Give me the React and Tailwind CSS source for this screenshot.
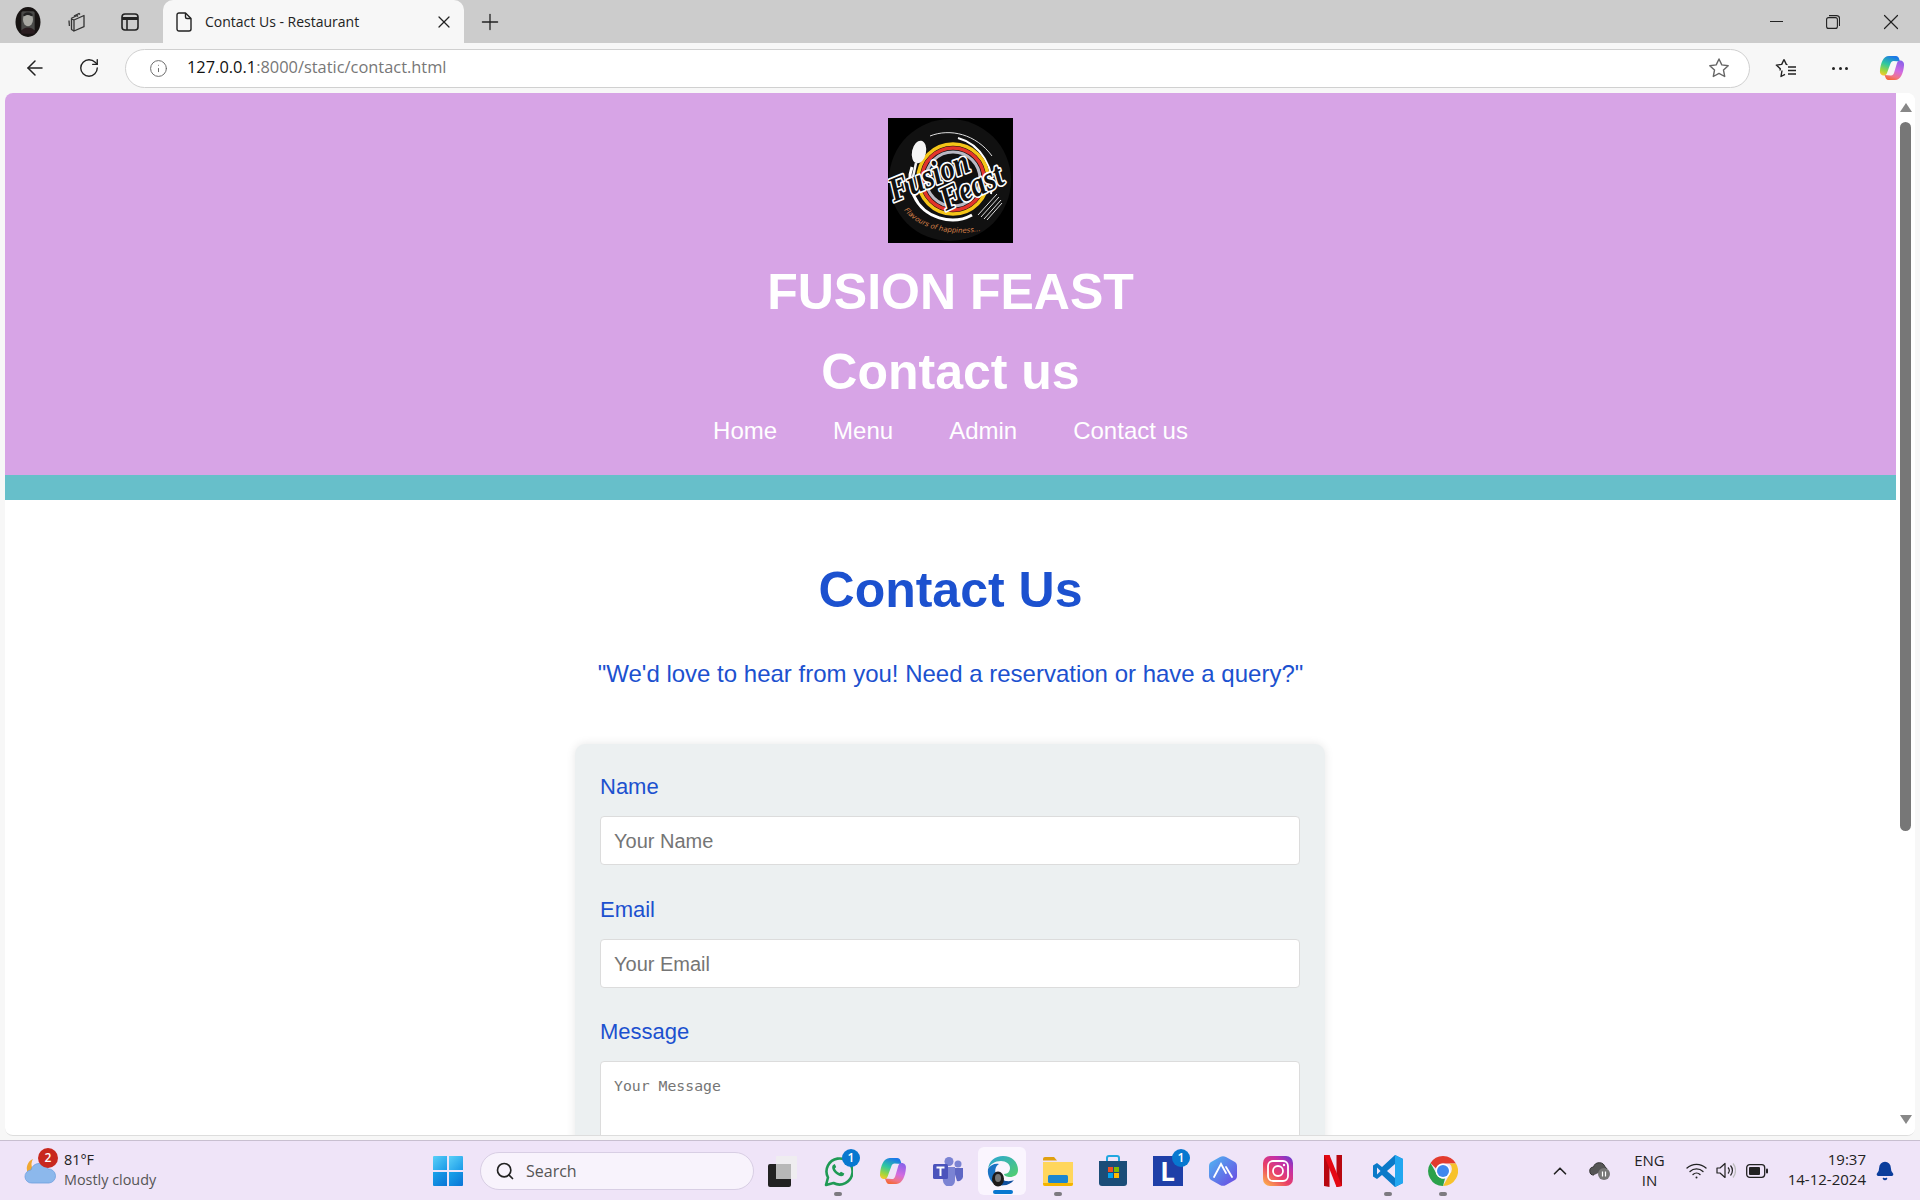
import React from 'react';
import { ArrowLeft, RotateCw, Info, X, Plus, ChevronUp, Search, Bell } from 'lucide-react';

const Avatar = ({ size = 30 }) => (
  <svg width={size} height={size} viewBox="0 0 30 36">
    <ellipse cx="15" cy="18" rx="15" ry="18" fill="#171312" />
    <rect x="7" y="5" width="16" height="24" rx="2" fill="#4a4a48" />
    <ellipse cx="15" cy="15" rx="6" ry="8" fill="#a8a8a2" />
    <path d="M7 29c2-6 14-6 16 0v3H7z" fill="#2a1d20" />
    <path d="M9 10c2-5 10-5 12 0l-2 1c-3-2-6-2-8 0z" fill="#222" />
  </svg>
);

const CollectionsIcon = () => (
  <svg width="22" height="22" viewBox="0 0 22 22" fill="none" stroke="#333" strokeWidth="1.3" strokeLinejoin="round">
    <path d="M8 5 13 2.500l1 1" />
    <path d="M5 7.500 11 4.500l1 1" />
    <path d="M3 9.500 3.400 15" />
    <path d="M8 9l10-4.500v11.200L8 20z" />
    <path d="M8 9 5.500 8v10.500L8 20" />
  </svg>
);

const TabActionsIcon = () => (
  <svg width="18" height="18" viewBox="0 0 18 18" fill="none" stroke="#222" strokeWidth="1.6">
    <rect x="1" y="1" width="16" height="16" rx="3" />
    <path d="M1 5.500h16" strokeWidth="3" />
    <path d="M6 5.500V17" />
  </svg>
);

const DocIcon = () => (
  <svg width="16" height="20" viewBox="0 0 16 20" fill="none" stroke="#222" strokeWidth="1.4" strokeLinejoin="round">
    <path d="M3 1h6.500L15 6.500V17a2 2 0 0 1-2 2H3a2 2 0 0 1-2-2V3a2 2 0 0 1 2-2z" />
    <path d="M9.500 1v4a1.500 1.500 0 0 0 1.500 1.500h4" />
  </svg>
);

const StarOutline = ({ color = '#666' }) => (
  <svg width="22" height="22" viewBox="0 0 22 22" fill="none" stroke={color} strokeWidth="1.4" strokeLinejoin="round">
    <path d="M11 2l2.800 5.900 6.400.8-4.700 4.400 1.200 6.400L11 16.400l-5.700 3.100 1.200-6.400L1.800 8.700l6.400-.8z" />
  </svg>
);

const FavoritesIcon = () => (
  <svg width="22" height="20" viewBox="0 0 22 20" fill="none" stroke="#222" strokeWidth="1.4" strokeLinejoin="round">
    <path d="M9 1.500l2.300 4.900 1.200.2M7 12.500l-1 6 4-2.200" />
    <path d="M9 1.500 6.700 6.400l-5.400.7 4 3.700-.3 1.700" />
    <path d="M13 9h8M13 12.500h8M13 16h8" strokeWidth="1.5" />
  </svg>
);

const CopilotIcon = ({ size = 26, id = 'a' }) => (
  <svg width={size} height={size} viewBox="0 0 26 26">
    <defs>
      <linearGradient id={`cpl${id}`} x1="0.6" y1="0" x2="0.2" y2="1">
        <stop offset="0" stopColor="#1b78e8" />
        <stop offset="0.45" stopColor="#2fc8a0" />
        <stop offset="0.8" stopColor="#a5d63a" />
        <stop offset="1" stopColor="#f6c92e" />
      </linearGradient>
      <linearGradient id={`cpr${id}`} x1="0.7" y1="0" x2="0.35" y2="1">
        <stop offset="0" stopColor="#8a62ea" />
        <stop offset="0.5" stopColor="#d26be0" />
        <stop offset="0.8" stopColor="#f0758a" />
        <stop offset="1" stopColor="#f4683a" />
      </linearGradient>
    </defs>
    <path d="M10 1h7c1.500 0 2.500 1 3 2.500l1 3-6.500-.5c-1.500 0-2.500 1-3 2.500L8 18c-.5 1.500-1.500 2.500-3 2.500-2.500 0-4.500-2-4-5C1.500 9 4 1 10 1z" fill={`url(#cpl${id})`} />
    <path d="M16 25H9c-1 0-2-1-2.500-2.500L5.500 20l6.500.5c1.500 0 2.500-1 3-2.500l3-10c.5-1.500 1.500-2.500 3-2.500 2.500 0 4.500 2 4 5C24.500 17 22 25 16 25z" fill={`url(#cpr${id})`} />
  </svg>
);

const FusionLogo = () => (
  <svg width="125" height="125" viewBox="0 0 125 125">
    <rect width="125" height="125" fill="#000" />
    <circle cx="62" cy="62" r="61" fill="#111" />
    <path d="M42 18C62 10 88 16 104 38" fill="none" stroke="#ddd" strokeWidth="1" />
    <path d="M84 97C64 108 36 100 26 78C21 68 21 57 24 49" fill="none" stroke="#fff" strokeWidth="3" />
    <path d="M70 20C92 26 108 50 103 76" fill="none" stroke="#fff" strokeWidth="2" />
    <circle cx="65" cy="61" r="35" fill="none" stroke="#f5c518" strokeWidth="3.500" />
    <circle cx="65" cy="61" r="31" fill="none" stroke="#e3342b" strokeWidth="3.500" />
    <circle cx="65" cy="61" r="27" fill="none" stroke="#b9b9c4" strokeWidth="3" />
    <ellipse cx="31" cy="34" rx="7" ry="11.500" transform="rotate(12 31 34)" fill="#f4f4f4" />
    <path d="M28 45l-3 14" stroke="#f4f4f4" strokeWidth="2.500" />
    <g stroke="#ddd" strokeWidth="1">
      <path d="M109 76 90 97M111 79 93 99M113 82 96 101M114 85 99 102" />
    </g>
    <text x="6" y="84" transform="rotate(-22 6 84)" fontFamily="'Liberation Serif', serif" fontStyle="italic" fontWeight="700" fontSize="34" fill="#111" stroke="#fff" strokeWidth="3.400" strokeLinejoin="round" paintOrder="stroke" textLength="84" lengthAdjust="spacingAndGlyphs">Fusion</text>
    <text x="58" y="93" transform="rotate(-25 58 93)" fontFamily="'Liberation Serif', serif" fontStyle="italic" fontWeight="700" fontSize="34" fill="#111" stroke="#fff" strokeWidth="3.400" strokeLinejoin="round" paintOrder="stroke" textLength="66" lengthAdjust="spacingAndGlyphs">Feast</text>
    <path id="logo-tag" d="M16 92C28 108 56 119 92 113" fill="none" />
    <text fontFamily="'DejaVu Sans', sans-serif" fontStyle="italic" fontSize="7" fill="#d9824a">
      <textPath href="#logo-tag">Flavours of happiness...</textPath>
    </text>
  </svg>
);

const WeatherIcon = () => (
  <svg width="32" height="34" viewBox="0 0 32 34">
    <path d="M9 5a10 10 0 0 0 6 15L4 19A10 10 0 0 1 9 5z" fill="#f0a832" />
    <path d="M8 29a6.500 6.500 0 0 1-1-13 9 9 0 0 1 17-1 7 7 0 0 1 1 14z" fill="#8cb8ec" stroke="#6d9ede" strokeWidth="0.800" />
  </svg>
);

const StartIcon = () => (
  <svg width="30" height="30" viewBox="0 0 30 30">
    <defs>
      <linearGradient id="stA" x1="0" y1="0" x2="1" y2="1">
        <stop offset="0" stopColor="#5ad0f8" />
        <stop offset="1" stopColor="#1a9ae8" />
      </linearGradient>
      <linearGradient id="stB" x1="0" y1="0" x2="1" y2="1">
        <stop offset="0" stopColor="#1aa4ea" />
        <stop offset="1" stopColor="#0a74d6" />
      </linearGradient>
    </defs>
    <path d="M1 0h13v14H0V1a1 1 0 0 1 1-1z" fill="url(#stA)" />
    <path d="M16 0h13a1 1 0 0 1 1 1v13H16z" fill="url(#stA)" />
    <path d="M0 16h14v14H1a1 1 0 0 1-1-1z" fill="url(#stB)" />
    <path d="M16 16h14v13a1 1 0 0 1-1 1H16z" fill="url(#stB)" />
  </svg>
);

const TaskViewIcon = () => (
  <svg width="30" height="32" viewBox="0 0 30 32">
    <rect x="0" y="9" width="23" height="23" rx="2" fill="#222" />
    <rect x="8" y="1" width="21" height="23" rx="1" fill="#eeeeee" fillOpacity="0.85" />
    <rect x="8" y="9" width="15" height="15" fill="#b8b8b8" />
  </svg>
);

const WhatsappIcon = () => (
  <svg width="30" height="32" viewBox="0 0 30 32" fill="none">
    <path d="M3 30l2-7.500A13 13 0 1 1 10.500 28z" stroke="#1f9a55" strokeWidth="2.600" strokeLinejoin="round" />
    <path d="M10 10c-1.500 1.500-1 5 2 8s6.500 4 8.500 2.500l.8-2-3.300-1.800-1.500 1.400c-2-.8-3.700-2.500-4.600-4.500l1.300-1.500L11.800 9z" fill="#1f9a55" />
  </svg>
);

const TeamsIcon = () => (
  <svg width="32" height="30" viewBox="0 0 32 30">
    <circle cx="26" cy="8" r="3.500" fill="#7b83d3" />
    <circle cx="17" cy="5.500" r="4.500" fill="#7b83d3" />
    <path d="M21 12h10v9a5 5 0 0 1-6 4z" fill="#5f67c4" />
    <path d="M9 11h14v13a6 6 0 0 1-12 1z" fill="#7b83d3" />
    <rect x="1" y="8" width="15" height="15" rx="1.500" fill="#4b53bc" />
    <path d="M4.500 11.500h8M8.500 11.500V20" stroke="#fff" strokeWidth="2" />
  </svg>
);

const EdgeIcon = () => (
  <svg width="32" height="32" viewBox="0 0 32 32">
    <defs>
      <linearGradient id="edA" x1="0" y1="0" x2="1" y2="1">
        <stop offset="0" stopColor="#2aa5d8" />
        <stop offset="1" stopColor="#54d06a" />
      </linearGradient>
    </defs>
    <path d="M16 1c9 0 15 6 15 14 0 5-4 7-8 7-3 0-6-1-6-3 4 0 6-3 6-6 0-4-4-7-9-7C8 6 3 9 1 14 2 6 8 1 16 1z" fill="url(#edA)" />
    <path d="M1 14c2-4 7-6 11-5-4 2-5 8-2 13 2 4 7 6 12 5-3 3-8 4-12 3C4 28 0 21 1 14z" fill="#1b74c4" />
    <path d="M14 30c5 1 10-1 13-5-2 1-7 2-11 0z" fill="#0f4f9e" />
    <ellipse cx="11" cy="24" rx="6" ry="7.500" fill="#1d1a1a" />
    <ellipse cx="11" cy="23" rx="3" ry="4" fill="#777" />
  </svg>
);

const FolderIcon = () => (
  <svg width="30" height="30" viewBox="0 0 30 30">
    <path d="M0 3a2 2 0 0 1 2-2h9l3 3.500H0z" fill="#e0a010" />
    <path d="M0 6h30v22a2 2 0 0 1-2 2H2a2 2 0 0 1-2-2z" fill="#ffd65c" />
    <rect x="5" y="19" width="20" height="8" rx="1.500" fill="#1b86d0" />
    <path d="M0 27h30v1a2 2 0 0 1-2 2H2a2 2 0 0 1-2-2z" fill="#f4b400" />
  </svg>
);

const StoreIcon = () => (
  <svg width="30" height="32" viewBox="0 0 30 32">
    <path d="M9 7V3a2 2 0 0 1 2-2h8a2 2 0 0 1 2 2v4" fill="none" stroke="#22a7e0" strokeWidth="2" />
    <path d="M1 6h28v22a3 3 0 0 1-3 3H4a3 3 0 0 1-3-3z" fill="#1b4d78" />
    <rect x="10" y="12" width="5" height="5" fill="#f25022" />
    <rect x="16" y="12" width="5" height="5" fill="#7fba00" />
    <rect x="10" y="18" width="5" height="5" fill="#00a4ef" />
    <rect x="16" y="18" width="5" height="5" fill="#ffb900" />
  </svg>
);

const LIcon = () => (
  <div className="flex h-[30px] w-[30px] items-center justify-center bg-[#1f3fa8] text-[26px] leading-none font-bold text-white">L</div>
);

const ArcIcon = () => (
  <svg width="28" height="30" viewBox="0 0 28 30">
    <defs>
      <linearGradient id="acA" x1="0" y1="0" x2="1" y2="1">
        <stop offset="0" stopColor="#4fb8f2" />
        <stop offset="1" stopColor="#6d45e2" />
      </linearGradient>
    </defs>
    <path d="M11 1a6 6 0 0 1 6 0l8 4.500a5 5 0 0 1 3 4.500v10a5 5 0 0 1-3 4.500L17 29a6 6 0 0 1-6 0l-8-4.500A5 5 0 0 1 0 20V10a5 5 0 0 1 3-4.500z" fill="url(#acA)" />
    <path d="M5 21 12 8l5 9M17 11l6 10" stroke="#fff" strokeWidth="1.800" strokeLinecap="round" fill="none" />
  </svg>
);

const InstagramIcon = () => (
  <svg width="30" height="30" viewBox="0 0 30 30">
    <defs>
      <linearGradient id="igA" x1="0.1" y1="1" x2="0.9" y2="0">
        <stop offset="0" stopColor="#fdb04a" />
        <stop offset="0.4" stopColor="#ea3f66" />
        <stop offset="0.75" stopColor="#c22fa8" />
        <stop offset="1" stopColor="#6a3cd0" />
      </linearGradient>
    </defs>
    <rect width="30" height="30" rx="7" fill="url(#igA)" />
    <rect x="5" y="5" width="20" height="20" rx="5" fill="none" stroke="#fff" strokeWidth="1.800" />
    <circle cx="15" cy="15" r="5" fill="none" stroke="#fff" strokeWidth="1.800" />
    <circle cx="21" cy="9" r="1.200" fill="#fff" />
  </svg>
);

const NetflixIcon = () => (
  <svg width="18" height="32" viewBox="0 0 18 32">
    <path d="M0 0h5.500v32L0 31z" fill="#b80710" />
    <path d="M12.500 0H18v31l-5.500 1z" fill="#b80710" />
    <path d="M0 0h5.500L18 31l-5.500 1z" fill="#e50914" />
  </svg>
);

const VscodeIcon = () => (
  <svg width="30" height="32" viewBox="0 0 30 32">
    <path d="M22 0l8 4v24l-8 4L9 20l-5 4-4-2.500V10.500L4 8l5 4z" fill="#0b7ac8" />
    <path d="M22 0l8 4v24l-8 4z" fill="#22a7f0" />
    <path d="M22 9v14l-8-7z" fill="#f0e7fa" />
    <path d="M4 12.500v7L7.500 16z" fill="#f0e7fa" />
  </svg>
);

const ChromeIcon = () => (
  <svg width="30" height="30" viewBox="0 0 30 30">
    <path d="M15 0a15 15 0 0 1 13 7.500H15a7.500 7.500 0 0 0-7 5L2.500 7A15 15 0 0 1 15 0z" fill="#e33b2e" />
    <path d="M28 7.500A15 15 0 0 1 15 30l6.500-11.500a7.500 7.500 0 0 0 0-11z" fill="#f7c22c" />
    <path d="M15 30A15 15 0 0 1 2.500 7L9 18.500a7.500 7.500 0 0 0 8 4z" fill="#2ba14b" />
    <circle cx="15" cy="15" r="7.500" fill="#fff" />
    <circle cx="15" cy="15" r="6" fill="#3f87ee" />
  </svg>
);

const CloudPausedIcon = () => (
  <svg width="22" height="20" viewBox="0 0 22 20">
    <path d="M5 14a4 4 0 0 1-.5-8A6 6 0 0 1 16 6a4 4 0 0 1 2 2" fill="#555" stroke="#333" strokeWidth="1" />
    <circle cx="15" cy="13" r="6" fill="#777" />
    <path d="M13.500 10.500v5M16.500 10.500v5" stroke="#fff" strokeWidth="1.200" />
  </svg>
);

const WifiIcon = () => (
  <svg width="21" height="17" viewBox="0 0 21 17" fill="none" stroke="#222" strokeWidth="1.300" strokeLinecap="round">
    <path d="M1 6a14 14 0 0 1 19 0" />
    <path d="M4 9.500a9.500 9.500 0 0 1 13 0" />
    <path d="M7 12.500a5 5 0 0 1 7 0" />
    <circle cx="10.500" cy="15.500" r="1" fill="#222" stroke="none" />
  </svg>
);

const VolumeIcon = () => (
  <svg width="20" height="17" viewBox="0 0 20 17" fill="none" stroke="#222" strokeWidth="1.200" strokeLinejoin="round">
    <path d="M1 6h3l5-4.500v14L4 11H1z" />
    <path d="M12 5.500a4.500 4.500 0 0 1 0 6M14.500 3.500a7.500 7.500 0 0 1 0 10" />
    <path d="M17 1.500a11 11 0 0 1 0 14" stroke="#bbb" />
  </svg>
);

const BatteryIcon = () => (
  <svg width="22" height="14" viewBox="0 0 22 14">
    <rect x="0.700" y="0.700" width="18" height="12.600" rx="3" fill="none" stroke="#222" strokeWidth="1.300" />
    <rect x="3" y="3" width="11" height="8" rx="1" fill="#222" />
    <rect x="20" y="4.500" width="2" height="5" rx="1" fill="#222" />
  </svg>
);

const taskbarApps = [
  { key: 'taskview', icon: <TaskViewIcon /> },
  { key: 'whatsapp', icon: <WhatsappIcon />, badge: '1', running: true },
  { key: 'copilot', icon: <CopilotIcon size={28} id="b" /> },
  { key: 'teams', icon: <TeamsIcon /> },
  { key: 'edge', icon: <EdgeIcon />, active: true },
  { key: 'folder', icon: <FolderIcon />, running: true },
  { key: 'store', icon: <StoreIcon /> },
  { key: 'l', icon: <LIcon />, badge: '1' },
  { key: 'arc', icon: <ArcIcon /> },
  { key: 'instagram', icon: <InstagramIcon /> },
  { key: 'netflix', icon: <NetflixIcon /> },
  { key: 'vscode', icon: <VscodeIcon />, running: true },
  { key: 'chrome', icon: <ChromeIcon />, running: true },
];

const TaskbarApp = ({ app }) => (
  <div className="relative flex h-12 w-[55px] items-center justify-center">
    {app.active && <div className="absolute inset-y-0 left-[3px] right-1 rounded-md bg-[#faf5fe]" />}
    <div className="relative">{app.icon}</div>
    {app.badge && (
      <span className="absolute right-[5px] top-[2px] flex h-[18px] w-[18px] items-center justify-center rounded-full bg-[#0878d0] text-[12px] font-semibold text-white">
        {app.badge}
      </span>
    )}
    {app.running && <span className="absolute bottom-[-1px] h-[4px] w-2 rounded-full bg-[#7d7a80]" />}
    {app.active && <span className="absolute bottom-[1px] h-[4px] w-5 rounded-full bg-[#0878d0]" />}
  </div>
);

const navLinks = ['Home', 'Menu', 'Admin', 'Contact us'];

const Field = ({ label, placeholder }) => (
  <div className="mb-[31.500px]">
    <label className="mb-[17px] block text-[22px] leading-[25px] text-[#1c51cf]">{label}</label>
    <input
      placeholder={placeholder}
      className="block h-[49px] w-full rounded-[4px] border border-[#dcdcdc] bg-white px-[13px] pt-[2px] text-[20px] placeholder:text-[#757575] outline-none"
    />
  </div>
);

const App = () => {
  return (
    <div className="flex h-screen flex-col overflow-hidden bg-[#f7f7f7] font-['Liberation_Sans',sans-serif]">
      {/* Tab strip */}
      <div className="flex h-[43px] items-center bg-[#cccccc] font-['Open_Sans',sans-serif]">
        <div className="flex w-[163px] items-center pl-[13px]">
          <Avatar />
          <div className="ml-[23px]"><CollectionsIcon /></div>
          <div className="ml-[33px]"><TabActionsIcon /></div>
        </div>
        <div className="flex h-full w-[301px] items-center self-end rounded-t-[10px] bg-[#f7f7f7] pl-[13px] pr-[10px]">
          <DocIcon />
          <span className="mb-[1px] ml-[13px] flex-1 text-[14px] text-[#222]">Contact Us - Restaurant</span>
          <X size={20} strokeWidth={1.5} color="#222" />
        </div>
        <div className="ml-[13px]"><Plus size={26} strokeWidth={1.2} color="#222" /></div>
        <div className="ml-auto flex items-center pr-[16px]">
          <div className="h-px w-[13px] bg-[#222]" />
          <svg className="ml-[43px]" width="14" height="14" viewBox="0 0 14 14" fill="none" stroke="#222" strokeWidth="1.100">
            <rect x="0.600" y="2.600" width="10.800" height="10.800" rx="2" />
            <path d="M3 .6h7.500a3 3 0 0 1 3 3V11" />
          </svg>
          <div className="ml-[38px]"><X size={26} strokeWidth={1.1} color="#222" /></div>
        </div>
      </div>

      {/* Toolbar */}
      <div className="flex h-[50px] items-center font-['Open_Sans',sans-serif]">
        <div className="flex w-[125px] items-center pl-[23px]">
          <ArrowLeft size={24} strokeWidth={1.5} color="#222" />
          <div className="ml-[31px]"><RotateCw size={22} strokeWidth={1.5} color="#222" /></div>
        </div>
        <div className="flex h-[39px] w-[1625px] items-center rounded-full border border-[#d0d0d0] bg-white pl-[23px] pr-[19px]">
          <Info size={19} strokeWidth={1.2} color="#666" />
          <span className="mb-[2px] ml-[19px] flex-1 text-[16.400px] text-[#777]">
            <span className="text-[#111]">127.0.0.1</span>:8000/static/contact.html
          </span>
          <StarOutline />
        </div>
        <div className="ml-[25px]"><FavoritesIcon /></div>
        <div className="ml-[35px] flex gap-[3.500px]">
          <span className="h-[3px] w-[3px] rounded-full bg-[#222]" />
          <span className="h-[3px] w-[3px] rounded-full bg-[#222]" />
          <span className="h-[3px] w-[3px] rounded-full bg-[#222]" />
        </div>
        <div className="ml-[31px]"><CopilotIcon /></div>
      </div>

      {/* Page viewport */}
      <div className="ml-[5px] mr-[5px] flex h-[1043px] overflow-hidden rounded-lg border-b border-[#dddddd] bg-white">
        <div className="min-w-0 flex-1 overflow-hidden">
          <header className="flex flex-col items-center bg-[#d7a4e6] pt-[25px] text-white">
            <FusionLogo />
            <h1 className="mt-[21px] text-[50px] leading-[56px] font-bold">FUSION FEAST</h1>
            <h2 className="mt-[29px] text-[50px] leading-[46px] font-bold">Contact us</h2>
            <nav className="mt-[22px] flex h-[58px] gap-[56px] text-[24px] leading-[27px]">
              {navLinks.map((link) => (
                <a key={link}>{link}</a>
              ))}
            </nav>
          </header>
          <div className="h-[25px] bg-[#67bfca]" />

          <main className="flex flex-col items-center pt-[62px]">
            <h2 className="text-[50px] leading-[56px] font-bold text-[#1c51cf]">Contact Us</h2>
            <p className="mt-[42px] text-[24px] leading-[27px] text-[#1c51cf]">"We'd love to hear from you! Need a reservation or have a query?"</p>
            <form className="mr-[1px] mt-[57px] w-[750px] rounded-[10px] bg-[#ecf0f1] px-[25px] pt-[30px] pb-[30px] shadow-[0_0_10px_rgba(0,0,0,0.1)]">
              <Field label="Name" placeholder="Your Name" />
              <Field label="Email" placeholder="Your Email" />
              <label className="mb-[17px] block text-[22px] leading-[25px] text-[#1c51cf]">Message</label>
              <textarea
                placeholder="Your Message"
                rows="5"
                className="block w-full rounded-[4px] border border-[#dcdcdc] bg-white px-[13px] py-[13px] font-['DejaVu_Sans_Mono',monospace] text-[14.800px] placeholder:text-[#757575] outline-none"
              />
            </form>
          </main>
        </div>

        {/* Scrollbar */}
        <div className="flex w-[19px] shrink-0 flex-col items-center bg-white pt-[10px]">
          <div className="h-0 w-0 border-x-[6px] border-b-[9px] border-x-transparent border-b-[#888]" />
          <div className="mt-[10px] h-[709px] w-[11px] rounded-full bg-[#777]" />
          <div className="mt-auto mb-[11px] h-0 w-0 border-x-[6px] border-t-[9px] border-x-transparent border-t-[#888]" />
        </div>
      </div>

      {/* Taskbar */}
      <div className="mt-[4px] flex h-[60px] items-center border-t border-[#c8bfd0] bg-[#efe4f8] font-['Open_Sans',sans-serif] text-[#222]">
        <div className="relative flex w-[433px] items-center pl-[24px]">
          <WeatherIcon />
          <span className="absolute left-[38px] top-[-2px] flex h-5 w-5 items-center justify-center rounded-full bg-[#c8281e] text-[12px] font-semibold text-white">2</span>
          <div className="mb-[2px] ml-[8px] text-[14.400px] leading-[20px]">
            <div>81°F</div>
            <div className="text-[#555]">Mostly cloudy</div>
          </div>
        </div>
        <StartIcon />
        <div className="ml-[17px] flex h-[38px] w-[274px] items-center rounded-full border border-[#d8cee4] bg-[#f8f3fc] pl-[14px]">
          <Search size={20} strokeWidth={2} color="#222" />
          <span className="ml-[11px] text-[16px] text-[#555]">Search</span>
        </div>
        <div className="ml-[1px] flex items-center">
          {taskbarApps.map((app) => (
            <TaskbarApp key={app.key} app={app} />
          ))}
        </div>
        <div className="ml-auto flex items-center pr-[25px]">
          <ChevronUp size={22} strokeWidth={1.8} color="#222" />
          <div className="ml-[18px]"><CloudPausedIcon /></div>
          <div className="mb-[2px] ml-[23px] text-center text-[15px] leading-[20px]">
            <div>ENG</div>
            <div>IN</div>
          </div>
          <div className="ml-[21px]"><WifiIcon /></div>
          <div className="ml-[9px]"><VolumeIcon /></div>
          <div className="ml-[10px]"><BatteryIcon /></div>
          <div className="mb-[3px] ml-[20px] text-right text-[15px] leading-[20px]">
            <div>19:37</div>
            <div>14-12-2024</div>
          </div>
          <div className="ml-[9px]"><Bell size={20} fill="#0a3d9c" color="#0a3d9c" /></div>
        </div>
      </div>
    </div>
  );
};

export default App;
